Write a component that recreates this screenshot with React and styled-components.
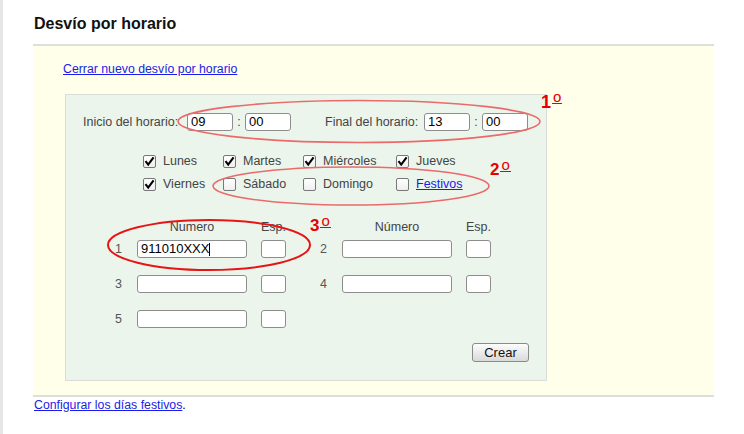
import React from 'react'
import styled, { createGlobalStyle } from 'styled-components'

const GlobalStyle = createGlobalStyle`
  html, body { margin: 0; padding: 0; background: #fff; }
  body { font-family: "Liberation Sans", Arial, sans-serif; }
`

const Page = styled.div`
  position: relative;
  box-sizing: border-box;
  width: 744px;
  min-height: 434px;
  border-left: 3px solid #e6e6e6;
  padding: 14px 0 0 30px;
`

const Main = styled.div`
  width: 681px;
`

const Title = styled.h1`
  margin: 0 0 11px 1px;
  font-size: 16px;
  line-height: 19px;
  font-weight: bold;
  color: #111;
`

const Box = styled.div`
  background: #ffffea;
  border-top: 2px solid #dedede;
  border-bottom: 2px solid #dedede;
  padding: 16px 0 14px 30px;
`

const Link = styled.a`
  display: ${p => (p.$block ? 'block' : 'inline')};
  font-size: ${p => p.$size || '12.3px'};
  line-height: 14px;
  color: #1c1ce8;
  text-decoration: underline;
  cursor: pointer;
`

const Panel = styled.div`
  box-sizing: border-box;
  width: 482px;
  margin: 18px 0 0 2px;
  border: 1px solid #d8ddd8;
  background: #ebf5ec;
  padding: 18px 17px 18px 17px;
  color: #444;
  font-size: 12.5px;
`

const TimeRow = styled.div`
  display: flex;
  align-items: center;
  height: 18px;
`

const TimeLabel = styled.span`
  width: ${p => p.$w}px;
  margin-left: ${p => p.$ml || 0}px;
  white-space: nowrap;
`

const Field = styled.div`
  box-sizing: border-box;
  width: ${p => (p.$w ? `${p.$w}px` : '100%')};
  height: 18px;
  border: 1px solid #8d8d8d;
  border-radius: 3px;
  background: #fff;
  padding: 0 3px;
  font-size: 13px;
  line-height: 16px;
  color: #000;
  display: flex;
  align-items: center;
`

const Caret = styled.span`
  display: inline-block;
  width: 1px;
  height: 13px;
  background: #000;
`

const Colon = styled.span`
  width: 12px;
  text-align: center;
`

const Days = styled.div`
  display: grid;
  grid-template-columns: 80px 80px 93px auto;
  grid-auto-rows: 18px;
  row-gap: 5px;
  margin: 21px 0 0 60px;
`

const Day = styled.label`
  display: flex;
  align-items: center;
  gap: 7px;
  white-space: nowrap;
`

const Box13 = styled.span`
  box-sizing: border-box;
  width: 13px;
  height: 13px;
  border: 1px solid #777;
  border-radius: 2px;
  background: linear-gradient(#ffffff, #eeeeee);
  display: flex;
  align-items: center;
  justify-content: center;
`

const Numbers = styled.div`
  margin: 26px 0 0 32px;
`

const NumGrid = styled.div`
  display: grid;
  grid-template-columns: 8px 110px 25px 28px 110px 25px;
  column-gap: 14px;
  grid-auto-rows: ${p => p.$row}px;
  row-gap: 17px;
  margin-bottom: ${p => p.$mb || 0}px;
  align-items: center;
`

const Head = styled.span`
  grid-column: ${p => p.$col};
  text-align: center;
  line-height: 16px;
  white-space: nowrap;
`

const NumLabel = styled.span`
  grid-column: ${p => p.$col};
  padding-left: ${p => p.$pad || 0}px;
  color: #555;
`

const Actions = styled.div`
  display: flex;
  justify-content: flex-end;
  margin-top: 15px;
`

const Button = styled.button`
  box-sizing: border-box;
  width: 57px;
  height: 19px;
  padding: 0;
  border: 1px solid #8a8a8a;
  border-radius: 3px;
  background: linear-gradient(#fdfdfd, #d9d9d9);
  font-family: "Liberation Sans", Arial, sans-serif;
  font-size: 13px;
  color: #111;
`

const Footer = styled.div`
  margin: 1px 0 0 1px;
  font-size: 12.3px;
  line-height: 14px;
  color: #000;
`

const Overlay = styled.svg`
  position: absolute;
  left: 0;
  top: 0;
  pointer-events: none;
`

const Mark = styled.span`
  position: absolute;
  left: ${p => p.$x}px;
  top: ${p => p.$y}px;
  display: flex;
  align-items: flex-start;
  font-size: ${p => p.$size}px;
  line-height: 1;
  font-weight: bold;
  color: #e60000;
`

const Ordinal = styled.span`
  margin: 2px 0 0 1px;
  padding: 0 1px;
  font-size: 15px;
  line-height: 4px;
  height: 8px;
  font-weight: normal;
  border-bottom: 1.5px solid #e60000;
`

function Check({ on }) {
  return (
    <Box13>
      {on && (
        <svg width="11" height="11" viewBox="0 0 11 11">
          <path d="M1.5 5.2 L4.2 8.6 L9.6 1.4" fill="none" stroke="#000" strokeWidth="2.1" />
        </svg>
      )}
    </Box13>
  )
}

const days = [
  ['Lunes', true], ['Martes', true], ['Miércoles', true], ['Jueves', true],
  ['Viernes', true], ['Sábado', false], ['Domingo', false], ['Festivos', false, true],
]

export default function App() {
  return (
    <>
      <GlobalStyle />
      <Page>
        <Main>
          <Title>Desvío por horario</Title>
          <Box>
            <Link $block>Cerrar nuevo desvío por horario</Link>
            <Panel>
              <TimeRow>
                <TimeLabel $w={104}>Inicio del horario:</TimeLabel>
                <Field $w={46}>09</Field>
                <Colon>:</Colon>
                <Field $w={46}>00</Field>
                <TimeLabel $w={99} $ml={34}>Final del horario:</TimeLabel>
                <Field $w={46}>13</Field>
                <Colon>:</Colon>
                <Field $w={46}>00</Field>
              </TimeRow>

              <Days>
                {days.map(([name, on, link]) => (
                  <Day key={name}>
                    <Check on={on} />
                    {link ? <Link $size="12.5px">{name}</Link> : name}
                  </Day>
                ))}
              </Days>

              <Numbers>
                <NumGrid $row={16} $mb={5}>
                  <Head $col={2}>Numero</Head>
                  <Head $col={3}>Esp.</Head>
                  <Head $col={5}>Número</Head>
                  <Head $col={6}>Esp.</Head>
                </NumGrid>
                <NumGrid $row={18}>
                  <NumLabel $col={1}>1</NumLabel>
                  <Field>911010XXX<Caret /></Field>
                  <Field />
                  <NumLabel $col={4} $pad={20}>2</NumLabel>
                  <Field />
                  <Field />
                  <NumLabel $col={1}>3</NumLabel>
                  <Field />
                  <Field />
                  <NumLabel $col={4} $pad={20}>4</NumLabel>
                  <Field />
                  <Field />
                  <NumLabel $col={1}>5</NumLabel>
                  <Field />
                  <Field />
                </NumGrid>
              </Numbers>

              <Actions>
                <Button>Crear</Button>
              </Actions>
            </Panel>
          </Box>
          <Footer>
            <Link $size="12.3px">Configurar los días festivos</Link>.
          </Footer>
        </Main>

        <Overlay width="744" height="434" viewBox="0 0 744 434">
          <ellipse cx="356" cy="121.5" rx="181" ry="21" fill="none" stroke="#ec6a6a" strokeWidth="1.6" />
          <ellipse cx="348" cy="186" rx="138" ry="19" fill="none" stroke="#ec6a6a" strokeWidth="1.6" />
          <ellipse cx="206" cy="245" rx="101" ry="25" fill="none" stroke="#e81414" strokeWidth="2" />
        </Overlay>
        <Mark $x={538} $y={93} $size={18}>1<Ordinal>o</Ordinal></Mark>
        <Mark $x={487} $y={161} $size={17}>2<Ordinal>o</Ordinal></Mark>
        <Mark $x={307} $y={217} $size={17}>3<Ordinal>o</Ordinal></Mark>
      </Page>
    </>
  )
}
